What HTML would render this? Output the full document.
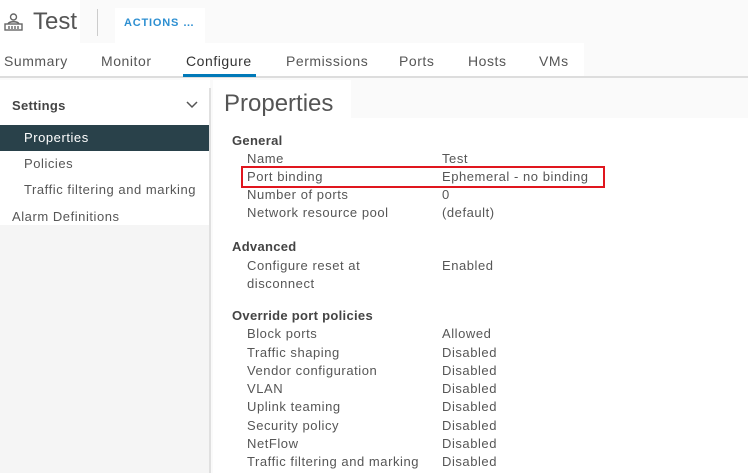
<!DOCTYPE html>
<html><head><style>
*{margin:0;padding:0;box-sizing:border-box}
body{width:748px;height:473px;background:#fafafa;font-family:"Liberation Sans",sans-serif;color:#565656;position:relative;overflow:hidden}
.a{position:absolute;white-space:nowrap}
.t{font-size:13px;letter-spacing:.55px}
.h{font-size:13px;font-weight:bold;color:#444;letter-spacing:.3px}
</style></head><body>
<div class="a" style="left:0;top:0;width:80px;height:43px;background:#fff"></div>
<div class="a" style="left:115px;top:8px;width:90px;height:36px;background:#fff"></div>
<div class="a" style="left:0;top:43px;width:584px;height:34px;background:#fff"></div>
<div class="a" style="left:0;top:80px;width:210px;height:145px;background:#fff"></div>
<div class="a" style="left:0;top:225px;width:210px;height:248px;background:#f5f5f5"></div>
<div class="a" style="left:213px;top:118px;width:535px;height:355px;background:#fff"></div>
<div class="a" style="left:213px;top:80px;width:138px;height:38px;background:#fff"></div>
<!-- header -->
<svg class="a" style="left:3px;top:12px" width="21" height="21" viewBox="0 0 21 21" fill="none" stroke="#666" stroke-width="1.4"><circle cx="10.5" cy="5" r="3"/><path d="M5 12c1-3 10-3 11 0"/><rect x="2" y="12" width="17" height="6"/><path d="M6 14v3M9 14v3M12 14v3M15 14v3"/></svg>
<div class="a" style="left:33px;top:8px;font-size:24px;color:#555">Test</div>
<div class="a" style="left:97px;top:9px;width:1px;height:27px;background:#ccc"></div>
<div class="a" style="left:124px;top:17px;font-size:11px;font-weight:bold;color:#2d8fd1;letter-spacing:.8px">ACTIONS …</div>
<!-- tabs -->
<div class="a t" style="left:4px;top:53px;font-size:14px">Summary</div>
<div class="a t" style="left:101px;top:53px;font-size:14px">Monitor</div>
<div class="a t" style="left:186px;top:53px;font-size:14px;color:#333">Configure</div>
<div class="a t" style="left:286px;top:53px;font-size:14px">Permissions</div>
<div class="a t" style="left:399px;top:53px;font-size:14px">Ports</div>
<div class="a t" style="left:468px;top:53px;font-size:14px">Hosts</div>
<div class="a t" style="left:539px;top:53px;font-size:14px">VMs</div>
<div class="a" style="left:0;top:76px;width:748px;height:2px;background:#ddd"></div>
<div class="a" style="left:183px;top:74px;width:73px;height:3px;background:#0079b8"></div>
<!-- sidebar -->
<div class="a h" style="left:12px;top:98px">Settings</div>
<svg class="a" style="left:186px;top:101px" width="12" height="8"><path d="M1 1l5 5 5-5" stroke="#555" stroke-width="1.5" fill="none"/></svg>
<div class="a" style="left:0;top:125px;width:210px;height:26px;background:#29414a"></div>
<div class="a t" style="left:24px;top:130px;color:#fff">Properties</div>
<div class="a t" style="left:24px;top:156px">Policies</div>
<div class="a t" style="left:24px;top:182px">Traffic filtering and marking</div>
<div class="a t" style="left:12px;top:209px">Alarm Definitions</div>
<div class="a" style="left:209px;top:88px;width:2px;height:385px;background:#e0e0e0"></div>
<!-- content -->
<div class="a" style="left:224px;top:90px;font-size:24px;color:#555">Properties</div>
<div class="a h" style="left:232px;top:133px">General</div>
<div class="a t" style="left:247px;top:151px">Name</div><div class="a t" style="left:442px;top:151px">Test</div>
<div class="a t" style="left:247px;top:169px">Port binding</div><div class="a t" style="left:442px;top:169px">Ephemeral - no binding</div>
<div class="a" style="left:241px;top:166px;width:364px;height:22px;border:2px solid #e0161e"></div>
<div class="a t" style="left:247px;top:187px">Number of ports</div><div class="a t" style="left:442px;top:187px">0</div>
<div class="a t" style="left:247px;top:205px">Network resource pool</div><div class="a t" style="left:442px;top:205px">(default)</div>
<div class="a h" style="left:232px;top:239px">Advanced</div>
<div class="a t" style="left:247px;top:258px">Configure reset at</div><div class="a t" style="left:442px;top:258px">Enabled</div>
<div class="a t" style="left:247px;top:276px">disconnect</div>
<div class="a h" style="left:232px;top:308px">Override port policies</div>
<div class="a t" style="left:247px;top:326px">Block ports</div><div class="a t" style="left:442px;top:326px">Allowed</div>
<div class="a t" style="left:247px;top:345px">Traffic shaping</div><div class="a t" style="left:442px;top:345px">Disabled</div>
<div class="a t" style="left:247px;top:363px">Vendor configuration</div><div class="a t" style="left:442px;top:363px">Disabled</div>
<div class="a t" style="left:247px;top:381px">VLAN</div><div class="a t" style="left:442px;top:381px">Disabled</div>
<div class="a t" style="left:247px;top:399px">Uplink teaming</div><div class="a t" style="left:442px;top:399px">Disabled</div>
<div class="a t" style="left:247px;top:418px">Security policy</div><div class="a t" style="left:442px;top:418px">Disabled</div>
<div class="a t" style="left:247px;top:436px">NetFlow</div><div class="a t" style="left:442px;top:436px">Disabled</div>
<div class="a t" style="left:247px;top:454px">Traffic filtering and marking</div><div class="a t" style="left:442px;top:454px">Disabled</div>
</body></html>
